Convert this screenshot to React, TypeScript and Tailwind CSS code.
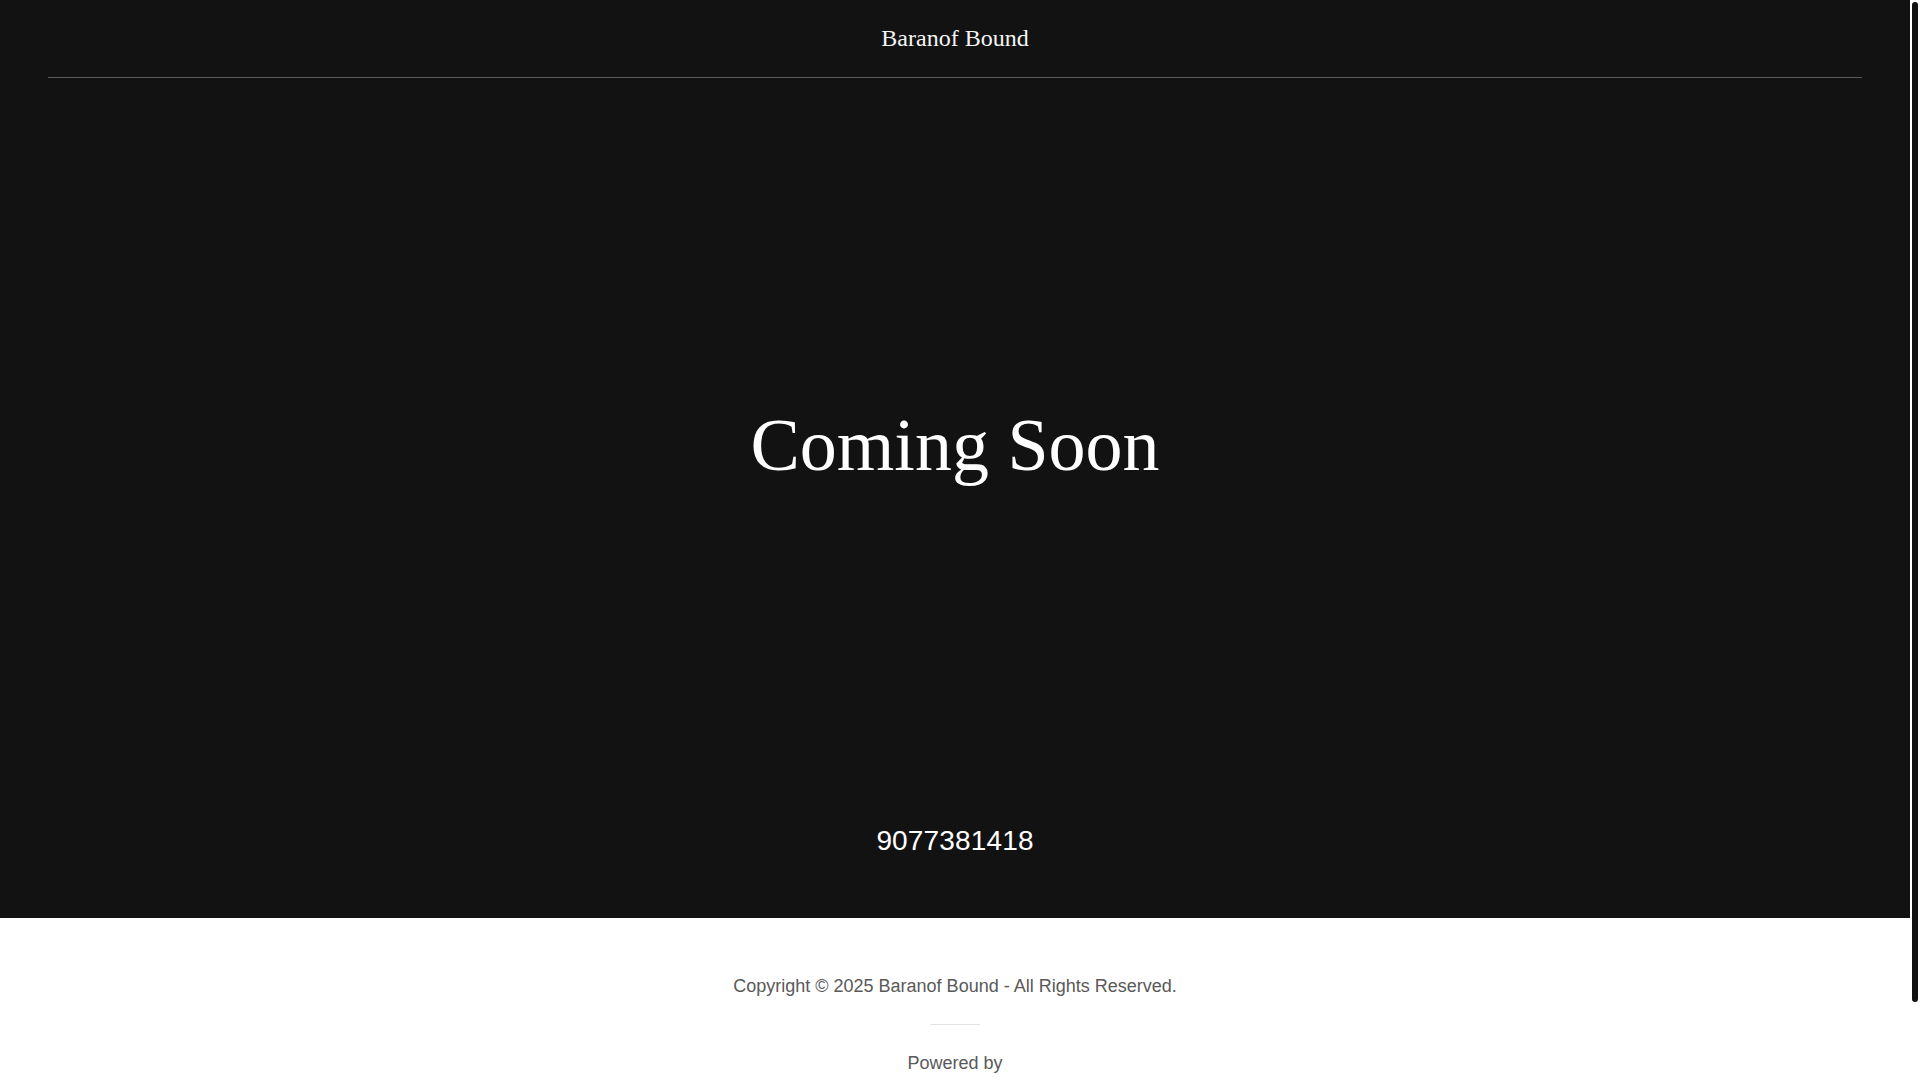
import React from "react";

export default function App() {
  return (
    <div className="h-screen w-full flex bg-white">
      <div className="flex-1 min-w-0 h-full overflow-y-auto [&::-webkit-scrollbar]:hidden [scrollbar-width:none]">
        <div className="bg-[#121212] h-[918px] flex flex-col">
          <header className="px-[48px]">
            <div className="pt-[20px] pb-[21px] border-b border-[#5a5a5a] flex justify-center">
              <span className="text-[24px] leading-[36px] text-[#f5f5f5] font-['Liberation_Serif',serif]">
                Baranof Bound
              </span>
            </div>
          </header>
          <div className="flex-1 flex flex-col items-center">
            <h1 className="mt-[330px] text-[74px] leading-none text-white font-normal font-['Liberation_Serif',serif]">
              Coming Soon
            </h1>
            <p className="mt-[338px] text-[28px] leading-[42px] tracking-[0.15px] text-white font-['Liberation_Sans',Arial,sans-serif]">
              9077381418
            </p>
          </div>
        </div>
        <footer className="bg-white flex flex-col items-center pt-[55px] pb-[90px] font-['Liberation_Sans',Arial,sans-serif]">
          <p className="text-[18px] leading-[27px] text-[#595959]">
            Copyright © 2025 Baranof Bound - All Rights Reserved.
          </p>
          <div className="mt-[24px] w-[50px] h-px bg-[#e2e2e2]" />
          <p className="mt-[25px] text-[18px] leading-[27px] text-[#595959]">
            Powered by
          </p>
        </footer>
      </div>
      <div className="w-[10px] h-full bg-white pt-[2px] px-[2px] shrink-0">
        <div className="w-[6px] h-[1000px] rounded-full bg-[#111111]" />
      </div>
    </div>
  );
}
